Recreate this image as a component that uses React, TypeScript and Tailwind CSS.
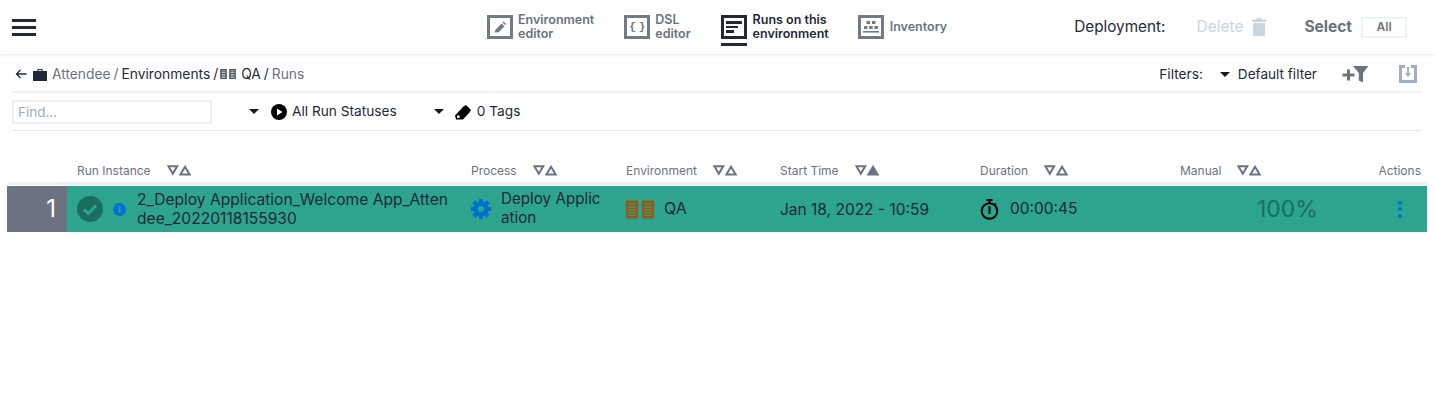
import React from "react";

function Sort({ active = false }: { active?: boolean }) {
  return (
    <svg width="24" height="11" viewBox="0 0 24 11" className="shrink-0 -mt-[1px]">
      <path d="M1.4 1.2H10.2L5.8 8.8Z" fill="none" stroke="#6b7280" strokeWidth="2" />
      <path d="M13.4 9.4H22.6L18 1.8Z" fill={active ? "#6b7280" : "none"} stroke="#6b7280" strokeWidth="2" />
    </svg>
  );
}

function TabIcon({ children, dark = false }: { children: React.ReactNode; dark?: boolean }) {
  return (
    <div className={`relative w-[26px] h-[24px] border-[3px] shrink-0 flex items-center justify-center ${dark ? "border-[#1f2937]" : "border-[#727a86]"}`}>
      {children}
    </div>
  );
}

function Tab({ icon, lines, dark = false, underline = false, narrow = false }: { icon: React.ReactNode; lines: string[]; dark?: boolean; underline?: boolean; narrow?: boolean }) {
  return (
    <div className={`relative flex items-center ${narrow ? "gap-[5px]" : "gap-[6px]"}`}>
      <TabIcon dark={dark}>{icon}</TabIcon>
      <div className={`text-[12.5px] leading-[14px] font-semibold ${dark ? "text-[#1f2937]" : "text-[#6b7280]"}`}>
        {lines.map((l) => (
          <div key={l}>{l}</div>
        ))}
      </div>
      {underline && <div className="absolute left-0 top-[30px] w-[26px] h-[3px] bg-[#1f2937]" />}
    </div>
  );
}

function Head({ label }: { label: string }) {
  return <span className="text-[12px] text-[#6b7280]">{label}</span>;
}

function Caret() {
  return <span className="inline-block w-0 h-0 border-x-[5px] border-x-transparent border-t-[5px] border-t-[#111827]" />;
}

function EnvBars({ w, h, color, line, small = false }: { w: number; h: number; color: string; line: string; small?: boolean }) {
  const bar = (
    <svg width={w} height={h} viewBox="0 0 12 18">
      <rect width="12" height="18" fill={color} />
      {[3.5, 6.5, 9.5, 12.5, 15].map((y) => (
        <rect key={y} x="2.5" y={y - 0.6} width="7" height="1.1" fill={line} />
      ))}
    </svg>
  );
  return (
    <span className={`inline-flex shrink-0 ${small ? "gap-[2px]" : "gap-[4px]"}`}>
      {bar}
      {bar}
    </span>
  );
}

export default function App() {
  return (
    <div className="w-[1435px] h-[407px] bg-white overflow-hidden font-['Inter',sans-serif] text-[#1f2937]">
      {/* Top bar */}
      <header className="h-[54px] flex items-center shadow-[0_1px_3px_rgba(0,0,0,0.1)] relative">
        <div className="w-[24px] ml-[12px] flex flex-col gap-[4px]">
          <div className="h-[3px] bg-[#1f2937]" />
          <div className="h-[3px] bg-[#1f2937]" />
          <div className="h-[3px] bg-[#1f2937]" />
        </div>
        <div className="ml-[451px] flex items-center">
          <Tab
            narrow
            lines={["Environment", "editor"]}
            icon={
              <svg width="14" height="14" viewBox="0 0 14 14">
                <path d="M1.5 12.5l1.2-3 5.8-6 3 2.8-5.8 6Z" fill="#727a86" />
                <path d="M9.5 2.5l1-1 2.5 2.5-1 1Z" fill="#727a86" />
              </svg>
            }
          />
          <div className="ml-[30px]">
            <Tab
              narrow
              lines={["DSL", "editor"]}
              icon={<span className="text-[11px] leading-none font-bold text-[#6b7280] font-['Liberation_Mono',monospace] tracking-[3px] pl-[3px]">{"{}"}</span>}
            />
          </div>
          <div className="ml-[30px]">
            <Tab
              dark
              underline
              lines={["Runs on this", "environment"]}
              icon={
                <div className="flex flex-col gap-[2px] w-[16px]">
                  <div className="h-[2.5px] w-[16px] bg-[#1f2937]" />
                  <div className="h-[2.5px] w-[12px] bg-[#1f2937]" />
                  <div className="h-[2.5px] w-[8px] bg-[#1f2937]" />
                </div>
              }
            />
          </div>
          <div className="ml-[29px]">
            <Tab
              lines={["Inventory"]}
              icon={
                <svg width="18" height="15" viewBox="0 0 18 15">
                  <rect x="4.5" y="1" width="3.5" height="3" fill="#727a86" />
                  <rect x="10" y="1" width="3.5" height="3" fill="#727a86" />
                  <rect x="2" y="6" width="3.5" height="3" fill="#727a86" />
                  <rect x="7.2" y="6" width="3.5" height="3" fill="#727a86" />
                  <rect x="12.4" y="6" width="3.5" height="3" fill="#727a86" />
                  <rect x="1" y="11" width="16" height="1.6" fill="#727a86" />
                </svg>
              }
            />
          </div>
        </div>
        <div className="ml-[127px] text-[15.3px] text-[#1f2937] whitespace-nowrap">Deployment:</div>
        <div className="ml-[31px] text-[15.5px] text-[#cbd5e0] whitespace-nowrap">Delete</div>
        <svg width="14" height="18" viewBox="0 0 14 18" className="ml-[9px]">
          <path d="M5 0h4l1 1.5h4V4H0V1.5h4ZM1 5h12v13H1Z" fill="#cbd5e0" />
        </svg>
        <div className="ml-[38px] text-[15.5px] font-bold text-[#6b7280] whitespace-nowrap">Select</div>
        <div className="ml-[9px] w-[46px] h-[21px] border-2 border-[#edf2f7] flex items-center justify-center text-[12px] font-semibold text-[#6b7280]">
          All
        </div>
      </header>

      {/* Breadcrumb */}
      <div className="mx-[12px] w-[1410px] h-[39px] border-b-2 border-[#edf2f7] flex items-center text-[13.8px] pt-[3px]">
        <svg width="12" height="12" viewBox="0 0 12 12" className="ml-[3px]">
          <path d="M11.5 6H1.5M5.5 2 1.5 6l4 4" fill="none" stroke="#1f2937" strokeWidth="1.3" />
        </svg>
        <svg width="14" height="13" viewBox="0 0 14 13" className="ml-[6px]">
          <path d="M4.5 3V1h5v2H14v10H0V3Zm1-1v1h3V2Z" fill="#1f2937" fillRule="evenodd" />
        </svg>
        <span className="ml-[5px] text-[#6b7280]">Attendee</span>
        <span className="ml-[3px] text-[#6b7280]">/</span>
        <span className="ml-[3px] text-[#1f2937]">Environments</span>
        <span className="ml-[3px] text-[#1f2937]">/</span>
        <span className="ml-[2px] inline-flex">
          <EnvBars small w={7} h={10} color="#4b5563" line="#ffffff" />
        </span>
        <span className="ml-[5px] text-[#1f2937]">QA</span>
        <span className="ml-[3px] text-[#1f2937]">/</span>
        <span className="ml-[3px] text-[#6b7280]">Runs</span>
        <span className="ml-auto mt-[1px] text-[13.7px] text-[#1f2937]">Filters:</span>
        <span className="ml-[17px] inline-flex"><Caret /></span>
        <span className="ml-[8px] mt-[1px] text-[13.6px] text-[#1f2937]">Default filter</span>
        <svg width="27" height="18" viewBox="0 0 27 18" className="ml-[25px]">
          <path d="M0.5 10h12M6.5 4.5v11" stroke="#6b7280" strokeWidth="3" />
          <path d="M11 1h15.5L21 8v9.5l-4.2-2V8Z" fill="#6b7280" />
        </svg>
        <svg width="18" height="18" viewBox="0 0 18 18" className="ml-[30px] mr-[5px]">
          <path d="M6 1.5H1.5v15h15v-15H12" fill="none" stroke="#a0aec0" strokeWidth="3" />
          <path d="M9 2v7" stroke="#a0aec0" strokeWidth="1.8" />
          <path d="M5.8 8 9 12l3.2-4Z" fill="#a0aec0" />
        </svg>
      </div>

      {/* Find row */}
      <div className="mx-[12px] w-[1410px] h-[38px] border-b border-[#e2e8f0] flex items-center">
        <input
          placeholder="Find..."
          readOnly
          className="w-[200px] h-[24px] border-2 border-[#edf2f7] px-[4px] text-[13.5px] outline-none placeholder:text-[#a0aec0]"
        />
        <span className="ml-[37px] inline-flex"><Caret /></span>
        <svg width="16" height="16" viewBox="0 0 16 16" className="ml-[12px]">
          <circle cx="8" cy="8" r="8" fill="#000" />
          <path d="M6 4.5 11.5 8 6 11.5Z" fill="#fff" />
        </svg>
        <span className="ml-[5px] text-[13.7px] text-[#1f2937]">All Run Statuses</span>
        <span className="ml-[37px] inline-flex"><Caret /></span>
        <svg width="16" height="16" viewBox="0 0 16 16" className="ml-[11px]">
          <path d="M0 11.5 8.5 2.5 11 1l5 5-1.5 2.5L8 15.5H1Z" fill="#000" />
          <rect x="2" y="11.5" width="2.6" height="2.4" fill="#fff" />
        </svg>
        <span className="ml-[6px] text-[13.7px] text-[#1f2937]">0 Tags</span>
      </div>

      {/* Table header */}
      <div className="mt-[28px] mx-[7px] w-[1420px] h-[26px] border-b-[3px] border-[#edf2f7] grid grid-cols-[70px_394px_155px_154px_200px_200px_190px_57px] items-center pt-[1px]">
        <div />
        <div className="flex items-center gap-[16px]">
          <Head label="Run Instance" />
          <Sort />
        </div>
        <div className="flex items-center gap-[16px]">
          <Head label="Process" />
          <Sort />
        </div>
        <div className="flex items-center gap-[16px]">
          <Head label="Environment" />
          <Sort />
        </div>
        <div className="flex items-center gap-[16px]">
          <Head label="Start Time" />
          <Sort active />
        </div>
        <div className="flex items-center gap-[16px]">
          <Head label="Duration" />
          <Sort />
        </div>
        <div className="flex items-center gap-[16px]">
          <Head label="Manual" />
          <Sort />
        </div>
        <div className="flex justify-end pr-[6px]">
          <Head label="Actions" />
        </div>
      </div>

      {/* Row */}
      <div className="mt-[1px] mx-[7px] w-[1420px] h-[46px] bg-[#2da58e] grid grid-cols-[60px_404px_155px_154px_200px_200px_190px_57px] items-center text-[#1f2937]">
        <div className="h-full bg-[#6b7280] text-white text-[24px] flex items-center justify-end pr-[11px]">1</div>
        <div className="flex items-center h-full pl-[10px]">
          <svg width="26" height="26" viewBox="0 0 26 26" className="shrink-0">
            <circle cx="13" cy="13" r="13" fill="#1a6e5f" />
            <path d="M7 13.5l4.2 4L19 9.5" fill="none" stroke="#2da58e" strokeWidth="3" />
          </svg>
          <svg width="13" height="13" viewBox="0 0 13 13" className="shrink-0 ml-[10px]">
            <circle cx="6.5" cy="6.5" r="6.5" fill="#0070d2" />
            <rect x="5.6" y="5.4" width="1.9" height="4.6" fill="#2da58e" />
            <rect x="5.6" y="2.8" width="1.9" height="1.8" fill="#2da58e" />
          </svg>
          <div className="ml-[11px] w-[315px] text-[15.6px] leading-[19px] break-all">
            2_Deploy Application_Welcome App_Attendee_20220118155930
          </div>
        </div>
        <div className="flex items-center h-full">
          <svg width="20" height="20" viewBox="0 0 20 20" className="shrink-0">
            <g fill="#0070d2">
              {[0, 45, 90, 135, 180, 225, 270, 315].map((a) => (
                <rect key={a} x="8" y="0" width="4" height="20" transform={`rotate(${a} 10 10)`} />
              ))}
              <circle cx="10" cy="10" r="7.6" />
            </g>
            <circle cx="10" cy="10" r="3" fill="#2da58e" />
          </svg>
          <div className="ml-[10px] w-[106px] text-[15.2px] leading-[19px] break-all -mt-[2px]">Deploy Application</div>
        </div>
        <div className="flex items-center h-full">
          <EnvBars w={12} h={19} color="#975a16" line="#2da58e" />
          <span className="ml-[10px] text-[16px] relative -top-[1px]">QA</span>
        </div>
        <div className="text-[15.5px] pt-[2px]">Jan 18, 2022 - 10:59</div>
        <div className="flex items-center">
          <svg width="19" height="21" viewBox="0 0 19 21" className="shrink-0">
            <circle cx="9.5" cy="12" r="7.8" fill="none" stroke="#000" strokeWidth="2" />
            <path d="M6.5 1h6M9.5 1v3M16 4.5l-1.8 1.8" stroke="#000" strokeWidth="2" fill="none" />
            <path d="M9.5 7v8" stroke="#000" strokeWidth="2" />
          </svg>
          <span className="ml-[11px] text-[15.5px]">00:00:45</span>
        </div>
        <div className="pl-[77px] text-[23px] text-[#1a6e5f] leading-none">100%</div>
        <div className="flex flex-col items-center gap-[2.5px] pl-[3px]">
          <div className="w-[4px] h-[4px] rounded-full bg-[#0070d2]" />
          <div className="w-[4px] h-[4px] rounded-full bg-[#0070d2]" />
          <div className="w-[4px] h-[4px] rounded-full bg-[#0070d2]" />
        </div>
      </div>
    </div>
  );
}
